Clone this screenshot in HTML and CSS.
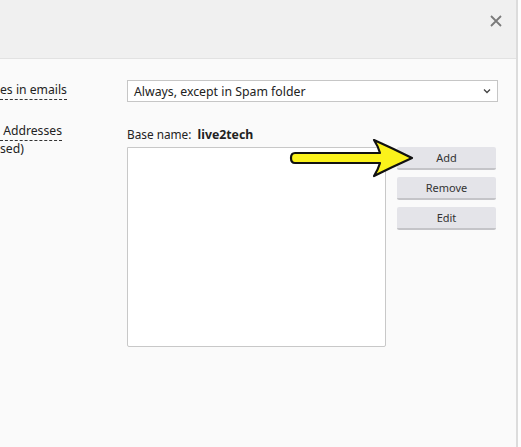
FILE: index.html
```html
<!DOCTYPE html>
<html>
<head>
<meta charset="utf-8">
<link rel="stylesheet" href="styles.css">
</head>
<body>
<div class="dialog">
  <div class="header">
    <svg class="close" width="14" height="14" viewBox="0 0 14 14"><path d="M2 2 L12 12 M12 2 L2 12" stroke="#7a7a7a" stroke-width="1.8" fill="none"/></svg>
  </div>
  <div class="content">
    <div class="row row1">
      <div class="label"><span class="dash">es in emails</span></div>
      <div class="select">
        <span>Always, except in Spam folder</span>
        <svg class="chev" width="8" height="6" viewBox="0 0 8 6"><path d="M1 1.5 L4 4.5 L7 1.5" fill="none" stroke="#444" stroke-width="1.3"/></svg>
      </div>
    </div>
    <div class="row row2">
      <div class="label">
        <div class="l1"><span class="dash">&nbsp;Addresses</span></div>
        <div class="l2">sed)</div>
      </div>
      <div class="main">
        <div class="base">Base name:&nbsp; <b>live2tech</b></div>
        <div class="listarea">
          <div class="listbox"></div>
          <div class="buttons">
            <div class="btn">Add</div>
            <div class="btn">Remove</div>
            <div class="btn">Edit</div>
          </div>
        </div>
      </div>
    </div>
  </div>
</div>
<svg class="arrow" width="130" height="42" viewBox="285 137 130 42">
  <path d="M295 153 L380 153 Q378 146 374 140 Q392 148 412 158 Q392 167 374 176 Q378 170 380 163 L295 163 Q291 163 291 158 Q291 153 295 153 Z" fill="#fbf21b" stroke="#111" stroke-width="2.2" stroke-linejoin="round"/>
</svg>
</body>
</html>
```
FILE: styles.css
```css
html, body {
  margin: 0;
  padding: 0;
  background: #fdfdfd;
}
body {
  width: 521px;
  height: 447px;
  overflow: hidden;
  position: relative;
  font-family: "Noto Sans", "Open Sans", sans-serif;
  color: #222;
}
.dialog {
  width: 516px;
  height: 447px;
  border-right: 2px solid #dcdcdc;
  background: #fafafa;
  display: flex;
  flex-direction: column;
}
.header {
  height: 58px;
  background: #f0f0f0;
  border-bottom: 1px solid #e2e2e2;
  display: flex;
  justify-content: flex-end;
  align-items: flex-start;
  flex: none;
}
.close {
  margin: 14px 13px 0 0;
}
.content {
  padding-top: 21px;
  display: flex;
  flex-direction: column;
}
.row {
  display: flex;
}
.label {
  width: 127px;
  font-size: 12.2px;
  color: #222;
  flex: none;
}
.dash {
  border-bottom: 1px dashed #333;
  padding-bottom: 1px;
}
.row1 .label {
  padding-top: 1px;
  line-height: 18px;
}
.select {
  height: 20px;
  border: 1px solid #c6c6c6;
  background: #fff;
  display: flex;
  align-items: center;
  justify-content: space-between;
  padding: 0 6px 0 6px;
  box-sizing: content-box;
  font-size: 12.3px;
  color: #222;
  width: 357px;
}
.row2 {
  margin-top: 19px;
}
.row2 .label {
  line-height: 18px;
  padding-top: 1px;
}
.base {
  font-size: 11.8px;
  line-height: 18px;
  padding-top: 4px;
  color: #222;
}
.base b {
  font-weight: 700;
  font-size: 12.3px;
}
.listarea {
  display: flex;
  margin-top: 3px;
}
.listbox {
  width: 257px;
  height: 198px;
  border: 1px solid #c8c8c8;
  border-radius: 0 0 2px 2px;
  background: #fff;
}
.buttons {
  margin-left: 11px;
  display: flex;
  flex-direction: column;
  gap: 7px;
}
.btn {
  width: 99px;
  height: 21px;
  background: #e4e4e9;
  border-bottom: 2px solid #c4c4c8;
  border-radius: 2px;
  font-size: 11px;
  color: #333;
  display: flex;
  align-items: center;
  justify-content: center;
}
.arrow {
  position: absolute;
  left: 285px;
  top: 137px;
}
```
